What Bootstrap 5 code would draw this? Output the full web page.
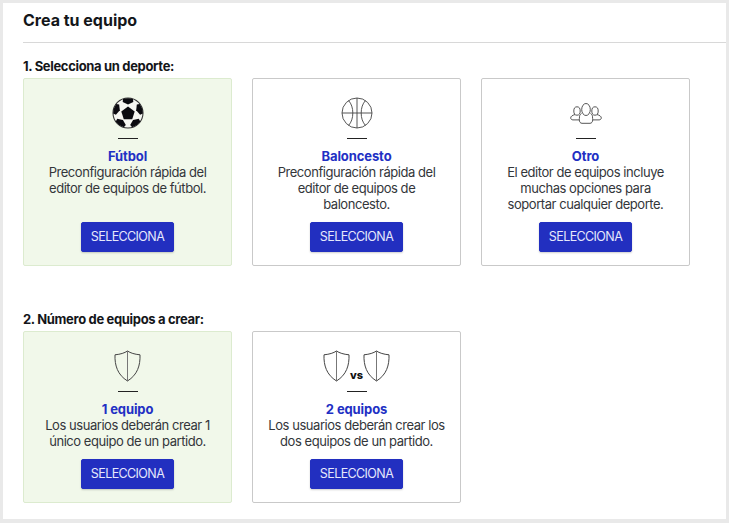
<!DOCTYPE html>
<html lang="es"><head><meta charset="utf-8"><title>Crea tu equipo</title>
<link href="https://cdn.jsdelivr.net/npm/bootstrap@5.3.0/dist/css/bootstrap.min.css" rel="stylesheet">
<style>
html,body{height:100%}
body{background:#e9e9e9;font-family:Inter,"Liberation Sans",sans-serif;color:#33363a;overflow:hidden}
.sheet{margin:3px 3px 0;height:516px;background:#fff;padding-left:20px}
.sheet-head{height:40px;border-bottom:1px solid #d8d8d8}
.sheet-head h1{font-size:16px;line-height:35px;font-weight:700;color:#14161a;margin:0}
.step-title{font-size:13px;line-height:16px;font-weight:700;letter-spacing:-.33px;color:#14161a;margin:0 0 4px}
.step-one{padding-top:15px}
.step-two{padding-top:45px}
.choice-row{gap:20px}
.choice{width:209px;height:188px;border:1px solid #c9c9c9;border-radius:2px;padding:17px 15px 13px;text-align:center}
.step-two .choice{height:172px}
.choice.on{background:#f1f8ea;border-color:#dcebcf}
.pic{height:34px;display:flex;justify-content:center;align-items:center}
.dash{width:20px;height:1px;background:#222;margin:8px auto 9px;border:0;opacity:1}
.choice-name{font-size:13px;line-height:16px;font-weight:700;letter-spacing:-.1px;color:#2230c4}
.choice-text{font-size:13px;line-height:16px;letter-spacing:-.45px;margin:0}
.pick{background:#222fc0;border:1px solid #222fc0;color:#e6e8fb;font-size:12.5px;line-height:16px;letter-spacing:-.6px;font-weight:400;width:93px;height:30px;padding:6px 0;border-radius:2px;box-shadow:0 1px 2px rgba(0,0,0,.2)}
.vs{font-size:11px;font-weight:800;color:#111;align-self:flex-end;line-height:12px;margin:0 0 2px}
</style></head>
<body>
<div class="sheet">
  <header class="sheet-head"><h1>Crea tu equipo</h1></header>
  <section class="step-one">
    <h2 class="step-title">1. Selecciona un deporte:</h2>
    <div class="d-flex choice-row">
      <div class="choice on d-flex flex-column">
        <div class="pic"><svg width="32" height="32" viewBox="0 0 32 32"><defs><path id="patch" d="M11 2q5-1.600 10 0l.3 3L16 7.400 10.700 5z" fill="#0b0b10"/></defs><circle cx="16" cy="16" r="15" fill="#f6f7f2" stroke="#333" stroke-width="1.100"/><path d="M16 9.500l6.700 4.900-2.500 7.900h-8.400l-2.500-7.900z" fill="#0b0b10"/><use href="#patch"/><use href="#patch" transform="rotate(72 16 16)"/><use href="#patch" transform="rotate(144 16 16)"/><use href="#patch" transform="rotate(216 16 16)"/><use href="#patch" transform="rotate(288 16 16)"/></svg></div>
        <hr class="dash">
        <div class="choice-name">Fútbol</div>
        <p class="choice-text">Preconfiguración rápida del editor de equipos de fútbol.</p>
        <div class="mt-auto"><button class="btn pick" type="button">SELECCIONA</button></div>
      </div>
      <div class="choice d-flex flex-column">
        <div class="pic"><svg width="32" height="32" viewBox="0 0 32 32" fill="none" stroke="#444" stroke-width=".9"><circle cx="16" cy="16" r="15"/><path d="M16 1v30M1 16h30M7.500 3.500c3 3.300 4.300 7.500 4.300 12.500s-1.300 9.200-4.300 12.500M24.500 3.500c-3 3.300-4.300 7.500-4.300 12.500s1.300 9.200 4.300 12.500"/></svg></div>
        <hr class="dash">
        <div class="choice-name">Baloncesto</div>
        <p class="choice-text">Preconfiguración rápida del editor de equipos de baloncesto.</p>
        <div class="mt-auto"><button class="btn pick" type="button">SELECCIONA</button></div>
      </div>
      <div class="choice d-flex flex-column">
        <div class="pic"><svg width="32" height="21" viewBox="0 0 32 21" fill="none" stroke="#444" stroke-width=".9"><ellipse cx="16" cy="6.500" rx="4.300" ry="6"/><ellipse cx="7" cy="8" rx="3.200" ry="4.200"/><ellipse cx="25" cy="8" rx="3.200" ry="4.200"/><path d="M11.500 10.500c-1.500 1.200-2 1.800-2 3.300 0 1.200-.2 2.200-.2 3 0 2 1 3.500 2.700 3.500h8c1.700 0 2.700-1.500 2.700-3.500 0-.8-.2-1.800-.2-3 0-1.500-.5-2.100-2-3.300M5 11.500c-2.500.8-4.300 1.800-4.300 3.400 0 1.200 1 2 2.300 2h6.300M27 11.500c2.500.8 4.300 1.800 4.300 3.400 0 1.200-1 2-2.300 2h-6.300"/></svg></div>
        <hr class="dash">
        <div class="choice-name">Otro</div>
        <p class="choice-text">El editor de equipos incluye muchas opciones para soportar cualquier deporte.</p>
        <div class="mt-auto"><button class="btn pick" type="button">SELECCIONA</button></div>
      </div>
    </div>
  </section>
  <section class="step-two">
    <h2 class="step-title">2. Número de equipos a crear:</h2>
    <div class="d-flex choice-row">
      <div class="choice on d-flex flex-column">
        <div class="pic"><svg width="27" height="32" viewBox="0 0 27 32" fill="none" stroke="#444" stroke-width="1"><path d="M13.500 1c3 2 7 3.300 12.500 3.800.4 10.500-2.500 20-12.500 26.200C3.500 24.800.6 15.300 1 4.800 6.500 4.300 10.500 3 13.500 1z"/><path d="M13.500 1v30" stroke="#777"/></svg></div>
        <hr class="dash">
        <div class="choice-name">1 equipo</div>
        <p class="choice-text">Los usuarios deberán crear 1 único equipo de un partido.</p>
        <div class="mt-auto"><button class="btn pick" type="button">SELECCIONA</button></div>
      </div>
      <div class="choice d-flex flex-column">
        <div class="pic"><svg width="27" height="32" viewBox="0 0 27 32" fill="none" stroke="#444" stroke-width="1"><path d="M13.500 1c3 2 7 3.300 12.500 3.800.4 10.500-2.500 20-12.500 26.200C3.500 24.800.6 15.300 1 4.800 6.500 4.300 10.500 3 13.500 1z"/><path d="M13.500 1v30" stroke="#777"/></svg><span class="vs">vs</span><svg width="27" height="32" viewBox="0 0 27 32" fill="none" stroke="#444" stroke-width="1"><path d="M13.500 1c3 2 7 3.300 12.500 3.800.4 10.500-2.500 20-12.500 26.200C3.500 24.800.6 15.300 1 4.800 6.500 4.300 10.500 3 13.500 1z"/><path d="M13.500 1v30" stroke="#777"/></svg></div>
        <hr class="dash">
        <div class="choice-name">2 equipos</div>
        <p class="choice-text">Los usuarios deberán crear los dos equipos de un partido.</p>
        <div class="mt-auto"><button class="btn pick" type="button">SELECCIONA</button></div>
      </div>
    </div>
  </section>
</div>
<script src="https://cdn.jsdelivr.net/npm/bootstrap@5.3.0/dist/js/bootstrap.bundle.min.js"></script>
</body></html>
